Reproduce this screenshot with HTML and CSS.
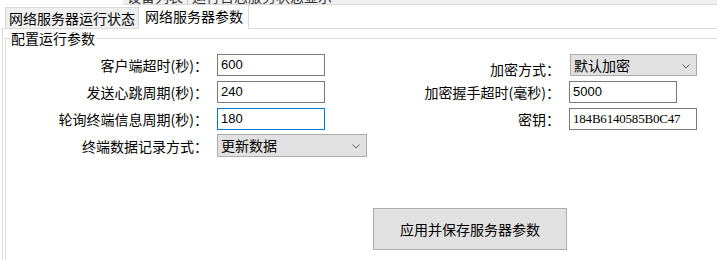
FILE: index.html
```html
<!DOCTYPE html>
<html lang="zh-CN">
<head>
  <meta charset="UTF-8">
  <title>网络服务器参数</title>
  <link rel="stylesheet" href="styles.css">
</head>
<body>
  <div class="topstrip">
    <span class="cut">设备列表</span><span class="cut sep">运行日志服务状态显示</span>
  </div>

  <div class="tabs">
    <div class="tab">网络服务器运行状态</div>
    <div class="tab active">网络服务器参数</div>
  </div>

  <div class="panel">
    <fieldset class="group">
      <legend>配置运行参数</legend>

      <div class="form">
        <label class="lbl">客户端超时(秒)：</label>
        <div class="field"><div class="edit short">600</div></div>
        <label class="lbl low">加密方式：</label>
        <div class="field">
          <div class="combo right">默认加密
            <svg class="chev" width="8" height="5" viewBox="0 0 8 5"><polyline points="0.5,0.5 4,4 7.5,0.5" fill="none" stroke="#606060" stroke-width="1"/></svg>
          </div>
        </div>

        <label class="lbl">发送心跳周期(秒)：</label>
        <div class="field"><div class="edit short">240</div></div>
        <label class="lbl">加密握手超时(毫秒)：</label>
        <div class="field"><div class="edit short">5000</div></div>

        <label class="lbl">轮询终端信息周期(秒)：</label>
        <div class="field"><div class="edit short focus">180</div></div>
        <label class="lbl">密钥：</label>
        <div class="field"><div class="edit long key">184B6140585B0C47</div></div>

        <label class="lbl">终端数据记录方式：</label>
        <div class="field">
          <div class="combo left">更新数据
            <svg class="chev" width="8" height="5" viewBox="0 0 8 5"><polyline points="0.5,0.5 4,4 7.5,0.5" fill="none" stroke="#606060" stroke-width="1"/></svg>
          </div>
        </div>
        <div></div>
        <div></div>

        <div class="btnrow">
          <button class="apply">应用并保存服务器参数</button>
        </div>
      </div>
    </fieldset>
  </div>
</body>
</html>
```

FILE: styles.css
```css
body {
  margin: 0;
  background: #fff;
  color: #000;
  font-family: "Noto Sans CJK SC", "Noto Sans", sans-serif;
  font-size: 14px;
  overflow: hidden;
}

.topstrip {
  height: 4px;
  margin-left: 123px;
  background: #f0f0f0;
  border-bottom: 1px solid #dadada;
  overflow: hidden;
  display: flex;
  white-space: nowrap;
}

.cut {
  display: block;
  line-height: 14px;
  margin-top: -11px;
  padding: 0 4px;
  color: #333;
}

.sep {
  border-left: 1px solid #c8c8c8;
}

.tabs {
  display: flex;
  align-items: flex-end;
  height: 23px;
  padding-left: 5px;
}

.tab {
  height: 20px;
  line-height: 20px;
  padding: 0 3px;
  background: #f0f0f0;
  border: 1px solid #d9d9d9;
  border-bottom: none;
  white-space: nowrap;
}

.tab.active {
  height: 24px;
  line-height: 22px;
  padding: 0 5px 0 6px;
  background: #fff;
  margin-bottom: -1px;
  border-left: none;
  position: relative;
}

.panel {
  margin-left: 2px;
  border-top: 1px solid #d9d9d9;
  border-left: 1px solid #d9d9d9;
  min-height: 240px;
  padding-left: 2px;
}

.group {
  margin: 1px 0 0 0;
  padding: 0;
  border: 1px solid #dcdcdc;
  border-right: none;
  border-bottom: none;
  min-height: 230px;
}

.group legend {
  padding: 0 1px;
  margin-left: 4px;
  line-height: 17px;
}

.form {
  display: grid;
  grid-template-columns: 202px 150px 184px 128px;
  grid-auto-rows: 22px;
  column-gap: 9px;
  row-gap: 5px;
  margin-top: 7px;
}

.lbl {
  display: flex;
  align-items: center;
  justify-content: flex-end;
  white-space: nowrap;
  line-height: 18px;
}

.lbl.low {
  align-items: flex-end;
  margin-bottom: -2px;
}

.field {
  display: flex;
  align-items: center;
}

.edit {
  box-sizing: border-box;
  height: 22px;
  border: 1px solid #7a7a7a;
  padding: 0 3px;
  font-family: "Liberation Sans", Arial, sans-serif;
  font-size: 13px;
  line-height: 20px;
  background: #fff;
}

.edit.short { width: 108px; }
.edit.long { width: 128px; }

.edit.focus {
  border-color: #0078d7;
}

.edit.key {
  font-family: "Liberation Serif", "DejaVu Serif", serif;
  font-size: 13px;
  letter-spacing: -0.2px;
}

.combo {
  box-sizing: border-box;
  position: relative;
  height: 22px;
  background: #e1e1e1;
  border: 1px solid #acacac;
  padding: 0 3px;
  line-height: 20px;
  white-space: nowrap;
}

.combo.left { width: 150px; margin-top: -1px; height: 23px; }
.combo.right { width: 127px; margin-left: 1px; }

.chev {
  position: absolute;
  right: 6px;
  top: 9px;
}

.btnrow {
  grid-column: 3 / span 2;
  margin-top: 46px;
  margin-left: -3px;
}

.apply {
  width: 194px;
  height: 42px;
  background: #e1e1e1;
  border: 1px solid #adadad;
  font-family: "Noto Sans CJK SC", sans-serif;
  font-size: 14px;
  color: #000;
  padding: 0;
}
```
